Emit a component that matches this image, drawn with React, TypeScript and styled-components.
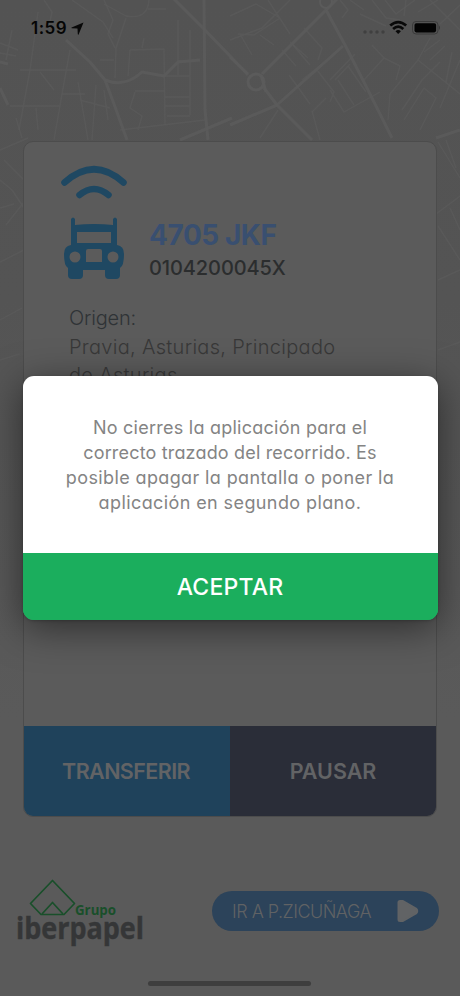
import React from 'react';
import styled, { createGlobalStyle } from 'styled-components';

const GlobalStyle = createGlobalStyle`
  *, *::before, *::after { box-sizing: border-box; }
  body {
    margin: 0;
    background: #5a5a5a;
    font-family: Inter, "Open Sans", sans-serif;
    font-feature-settings: "cv11";
  }
`;

const Screen = styled.div`
  position: relative;
  display: flex;
  flex-direction: column;
  width: 460px;
  height: 996px;
  overflow: hidden;
  background: #5a5a5a;
`;

const MapBackdrop = styled.svg`
  position: absolute;
  inset: 0;
  display: block;
`;

const StatusBar = styled.header`
  position: relative;
  display: flex;
  align-items: center;
  justify-content: space-between;
  flex: none;
  height: 56px;
  padding: 0 20px 0 31px;
`;

const StatusGroup = styled.div`
  display: flex;
  align-items: center;
`;

const Clock = styled.span`
  font-size: 17px;
  font-weight: 600;
  letter-spacing: 0.5px;
  line-height: 20px;
  color: #050505;
  margin-right: 4px;
`;

const Card = styled.main`
  position: relative;
  display: flex;
  flex-direction: column;
  flex: none;
  height: 676px;
  margin: 85px 23px 0;
  border: 1px solid #4c4c4c;
  border-radius: 10px;
  background: #5b5b5b;
  overflow: hidden;
`;

const VehicleRow = styled.section`
  display: flex;
  height: 138px;
  padding: 22px 0 0 37px;
`;

const VehicleInfo = styled.div`
  display: flex;
  flex-direction: column;
  padding: 53px 0 0 22px;
`;

const Plate = styled.strong`
  font-size: 28px;
  font-weight: 700;
  letter-spacing: -0.45px;
  line-height: 36px;
  color: #394f70;
`;

const Reference = styled.span`
  font-size: 20px;
  font-weight: 500;
  letter-spacing: -0.1px;
  line-height: 30px;
  color: #2b2d2e;
`;

const Origin = styled.section`
  display: flex;
  flex-direction: column;
  flex: 1;
  padding: 23px 0 0 45px;
`;

const OriginLabel = styled.span`
  font-size: 20px;
  font-weight: 350;
  letter-spacing: -0.2px;
  line-height: 30px;
  color: #2f3336;
`;

const OriginLine = styled.span`
  font-size: 20px;
  font-weight: 300;
  letter-spacing: 0.3px;
  line-height: 28px;
  color: #383838;
  white-space: nowrap;
`;

const Actions = styled.div`
  display: grid;
  grid-template-columns: 1fr 1fr;
  flex: none;
  height: 90px;
`;

const ActionButton = styled.button<{ $color: string; $spacing: number; $shift: number }>`
  border: 0;
  padding: 0 ${(p) => p.$shift}px 0 0;
  background: ${(p) => p.$color};
  color: #626365;
  font-family: inherit;
  font-feature-settings: inherit;
  font-size: 21.5px;
  font-weight: 600;
  letter-spacing: ${(p) => p.$spacing}px;
`;

const Footer = styled.footer`
  position: relative;
  display: flex;
  justify-content: space-between;
  align-items: flex-start;
  padding: 60px 21px 0 13px;
`;

const Pill = styled.button`
  display: flex;
  align-items: center;
  justify-content: space-between;
  width: 227px;
  height: 40px;
  margin-top: 14px;
  padding: 0 19px 0 20px;
  border: 0;
  border-radius: 20px;
  background: #2c435a;
  color: #606264;
  font-family: inherit;
  font-size: 18px;
  font-weight: 300;
  letter-spacing: -0.52px;
`;

const HomeIndicator = styled.div`
  position: relative;
  width: 163px;
  height: 5px;
  margin: auto auto 10px 148px;
  border-radius: 3px;
  background: #3e3e3e;
`;

const ModalLayer = styled.div`
  position: absolute;
  inset: 0;
  display: flex;
  align-items: center;
  justify-content: center;
`;

const Dialog = styled.div`
  display: flex;
  flex-direction: column;
  width: 415px;
  height: 244px;
  border-radius: 11px;
  background: linear-gradient(#fff 0 177px, #1bae5d 177px);
  overflow: hidden;
  box-shadow: 0 8px 38px rgba(0, 0, 0, 0.5), 0 1px 3px rgba(0, 0, 0, 0.2);
`;

const Message = styled.p`
  display: flex;
  flex-direction: column;
  align-items: center;
  flex: 1;
  margin: 0;
  padding-top: 39px;
  color: #848484;
`;

const MessageLine = styled.span<{ $spacing: number }>`
  font-size: 18px;
  line-height: 25px;
  letter-spacing: ${(p) => p.$spacing}px;
  white-space: nowrap;
`;

const AcceptButton = styled.button`
  flex: none;
  height: 66px;
  border: 0;
  padding: 0;
  background: #1bae5d;
  color: #fff;
  font-family: inherit;
  font-size: 23px;
  font-weight: 500;
  letter-spacing: 0.2px;
`;

const MESSAGE = [
  { text: 'No cierres la aplicación para el', spacing: 0.25 },
  { text: 'correcto trazado del recorrido. Es', spacing: 0.17 },
  { text: 'posible apagar la pantalla o poner la', spacing: 0.38 },
  { text: 'aplicación en segundo plano.', spacing: 0.4 },
];

const AVENUES = [
  'M66 40L90 62L105 80L114 104L127 140',
  'M105 80Q125 88 142 72L164 76L178 62L200 60',
  'M173 -2L203 28L232 58L248 75',
  'M262 74L326 10L338 -2',
  'M326 10L345 45L368 90L392 138',
  'M230 125L277 105L343 46',
  'M264 88L277 105L312 140',
  'M204 0L205 110L208 140',
  'M180 140L232 118M436 138L460 130',
  'M0 62L8 64M0 88L8 105',
];

const STREETS = [
  'M44 0L52 12L49 26M104 0L113 20L108 34L115 48',
  'M72 0L103 22L113 38M104 4L126 16Q148 20 149 0M148 9L166 9',
  'M70 50L62 94L54 140M38 12L30 70L19 130M20 70L76 70M10 106L60 106L62 94L85 94',
  'M126 18L116 48L115 78M130 50L164 49L165 125M144 38L142 48M130 50L128 76',
  'M100 60L114 60M178 20L178 75M190 30L190 115M178 61L190 61M135 91L165 91M165 97L190 97M165 106L190 106M165 76L190 76M167 116L190 116',
  'M135 92L130 108L142 116L138 130M78 82L88 140M96 85L92 140M104 90L108 120M80 100L110 108M120 130L205 120',
  'M16 118L22 138M36 108L38 130M40 72L54 90M0 43L18 50M0 53L16 56M12 30L6 60',
  'M230 16L256 4L280 18L254 35L238 34M230 40L262 28L290 0M268 0L290 34M282 50L296 66M290 42L308 58M274 45L260 35M240 34L252 55',
  'M304 28L322 48L318 60M317 70L334 92L330 102M330 90L344 112L380 92M326 98L312 112M338 80L354 105M348 66L366 92M355 54L330 80',
  'M293 45L310 65M289 75L300 90L310 104M302 80L322 64M335 80L350 64M312 111L320 140M278 110L260 138',
  'M390 94L418 60L430 38M390 94L388 120M372 45L384 58L364 80M384 58L400 66L396 80M402 110L422 80L440 62M418 60L460 94M404 120L424 88L436 98L420 130',
  'M372 0L386 18L400 20M385 0L396 14L415 0M430 0L460 30M460 5L440 24M452 52L446 82M460 60L440 108M440 40L424 52M445 46L430 60',
  'M340 0L348 10L342 18M350 0L364 10M360 14L386 26M418 12L438 0M406 0L404 16',
  'M0 150L28 138M0 180L12 190L24 208M4 160L24 180M0 208L14 204M6 225L24 202M0 262L24 250',
  'M438 142L460 178M446 140L456 168M436 214L460 196M438 226L460 260M450 208L460 230M438 280L460 270',
  'M0 320L22 308M0 360L20 354M438 350L460 342',
];

function StreetMap() {
  return (
    <MapBackdrop width="460" height="996" viewBox="0 0 460 996" fill="none" aria-hidden="true">
      <defs>
        <linearGradient id="mapFade" x1="0" y1="0" x2="0" y2="1">
          <stop offset="0" stopColor="#535353" />
          <stop offset="0.3" stopColor="#545454" />
          <stop offset="0.72" stopColor="#5a5a5a" />
        </linearGradient>
      </defs>
      <rect width="460" height="996" fill="url(#mapFade)" />
      <g stroke="#5b5b5b" strokeLinejoin="round">
        {STREETS.map((d) => <path key={d} d={d} strokeWidth="1.4" opacity="0.7" />)}
        {AVENUES.map((d) => <path key={d} d={d} strokeWidth="3" opacity="0.9" />)}
        <circle cx="256" cy="82" r="8" strokeWidth="3" />
        <circle cx="326" cy="2" r="6" strokeWidth="2" />
        <path d="M230 57L248 74M261 75L266 92" strokeWidth="3" />
      </g>
    </MapBackdrop>
  );
}

function LocationArrow() {
  return (
    <svg width="13" height="13" viewBox="0 0 13 13" aria-hidden="true">
      <path d="M12.5 .4L7.6 12.4Q7.1 13 6.8 12.2L6.5 6.6L.8 6.3Q0 6 .6 5.4Z" fill="#080808" />
    </svg>
  );
}

function SignalStatus() {
  return (
    <svg width="79" height="16" viewBox="0 0 79 16" aria-hidden="true">
      <g fill="#404040">
        <circle cx="4" cy="12" r="1.7" />
        <circle cx="10" cy="12" r="1.7" />
        <circle cx="16" cy="12" r="1.7" />
        <circle cx="22" cy="12" r="1.7" />
      </g>
      <g stroke="#090909" fill="none" strokeWidth="2.7">
        <path d="M29.2 5.6Q37.2 -1.4 45.2 5.6" />
        <path d="M32.1 9Q37.2 4.4 42.3 9" />
      </g>
      <path d="M34.5 11.2Q37.2 8.800 39.9 11.2L37.2 14Z" fill="#090909" />
      <rect x="51.5" y="1.5" width="25.5" height="12.5" rx="3.5" fill="none" stroke="#3b3b3b" />
      <rect x="53.5" y="3.2" width="21.6" height="9.2" rx="1.8" fill="#030303" />
      <path d="M78 5.5Q79.6 7.7 78 10Z" fill="#333" />
    </svg>
  );
}

function TruckIcon() {
  return (
    <svg width="66" height="116" viewBox="61 164 66 116" aria-hidden="true">
      <g fill="none" stroke="#1f4862" strokeWidth="6.5" strokeLinecap="round">
        <path d="M64.500 182.500Q94 156 123.500 182.500" />
        <path d="M79.500 195Q94 183 108.500 195" />
      </g>
      <path
        fill="#1f4862"
        fillRule="evenodd"
        d="M71 219Q73 216 75 219V225Q94 223 113 225V219Q115 216 117 219V245Q124 246 124 254Q124 266 120 268V275Q120 279 116 279H109Q105 279 105 275V270H83V275Q83 279 79 279H72Q68 279 68 275V268Q64 266 64 254Q64 246 71 245ZM77 232V243H111V232ZM88 249Q86 249 86 251V262H102V251Q102 249 100 249ZM75 251.500A5.500 5.500 0 1 0 75 262.500A5.500 5.500 0 1 0 75 251.500ZM113 251.500A5.500 5.500 0 1 0 113 262.500A5.500 5.500 0 1 0 113 251.500Z"
      />
    </svg>
  );
}

const LogoText = styled.text`
  font-family: "Open Sans", sans-serif;
  font-weight: 700;
`;

function CompanyLogo() {
  return (
    <svg width="138" height="78" viewBox="13 876 138 78" role="img" aria-label="Grupo iberpapel">
      <g fill="none" stroke="#194f2a" strokeWidth="1.7" strokeLinejoin="round">
        <path d="M52.500 879.500L74.500 902.500L64 913.500H41L30.500 902.500Z" />
        <path d="M42 913L52.500 901.500L63 913" />
      </g>
      <LogoText x="75" y="914" fontSize="14.5" fill="#194f2a" textLength="41" lengthAdjust="spacingAndGlyphs">Grupo</LogoText>
      <LogoText x="16" y="937.500" fontSize="30" fill="#353637" stroke="#353637" strokeWidth="0.400" textLength="128" lengthAdjust="spacingAndGlyphs">iberpapel</LogoText>
    </svg>
  );
}

function PlayIcon() {
  return (
    <svg width="23" height="24" viewBox="0 0 23 24" aria-hidden="true">
      <path d="M3 2L6 2L19 9.500Q21.500 12 19 14.500L6 22L3 22Q1.500 22 1.500 20.500V3.500Q1.500 2 3 2Z" fill="#616365" stroke="#616365" strokeWidth="2" strokeLinejoin="round" />
    </svg>
  );
}

export default function App() {
  return (
    <>
      <GlobalStyle />
      <Screen>
        <StreetMap />
        <StatusBar>
          <StatusGroup>
            <Clock>1:59</Clock>
            <LocationArrow />
          </StatusGroup>
          <SignalStatus />
        </StatusBar>
        <Card>
          <VehicleRow>
            <TruckIcon />
            <VehicleInfo>
              <Plate>4705 JKF</Plate>
              <Reference>0104200045X</Reference>
            </VehicleInfo>
          </VehicleRow>
          <Origin>
            <OriginLabel>Origen:</OriginLabel>
            <OriginLine>Pravia, Asturias, Principado</OriginLine>
            <OriginLine>de Asturias</OriginLine>
          </Origin>
          <Actions>
            <ActionButton $color="#1f425b" $spacing={-0.6} $shift={2}>TRANSFERIR</ActionButton>
            <ActionButton $color="#2a2d38" $spacing={0} $shift={0}>PAUSAR</ActionButton>
          </Actions>
        </Card>
        <Footer>
          <CompanyLogo />
          <Pill>
            IR A P.ZICUÑAGA
            <PlayIcon />
          </Pill>
        </Footer>
        <HomeIndicator />
        <ModalLayer>
          <Dialog role="dialog" aria-modal="true">
            <Message>
              {MESSAGE.map((line) => (
                <MessageLine key={line.text} $spacing={line.spacing}>{line.text}</MessageLine>
              ))}
            </Message>
            <AcceptButton>ACEPTAR</AcceptButton>
          </Dialog>
        </ModalLayer>
      </Screen>
    </>
  );
}
